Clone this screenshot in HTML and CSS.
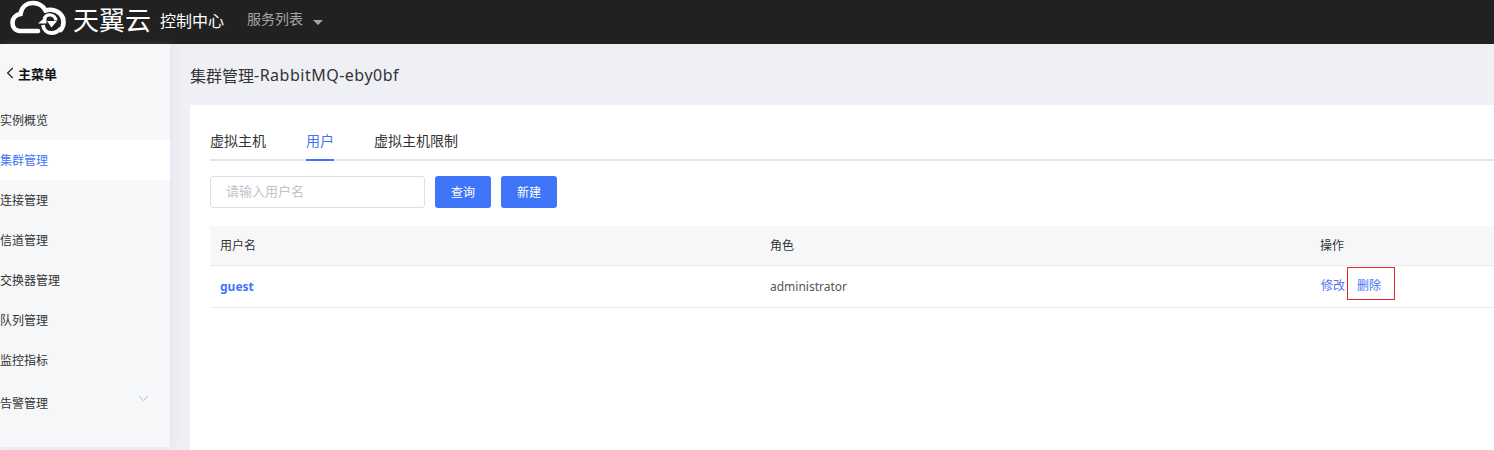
FILE: index.html
```html
<!DOCTYPE html>
<html lang="zh-CN">
<head>
<meta charset="utf-8">
<title>集群管理</title>
<link rel="stylesheet" href="styles.css">
</head>
<body>
<header class="topbar">
  <svg class="cloud" width="60" height="36" viewBox="0 0 60 36" fill="none">
    <path d="M30 31H12C7 31 4.500 27 4.500 22.500C4.500 18 8 14.500 12.500 14C13.500 7 18.500 3 25 3C31 3 35 6 37.500 10.500C39 10 41 9.500 43 9.800C50.500 10.500 55.500 15.500 55.500 22C55.500 25.500 54.500 28 52.500 30" stroke="#fff" stroke-width="4.600" stroke-linecap="round"/>
    <path d="M36 19C37.500 15.500 40 14.500 43 15C46 15.500 47.500 18 48 20.500" stroke="#fff" stroke-width="3.200"/>
    <path d="M35 25C35.500 30 39 33 43.500 33C47.500 33 50.500 31 52.500 28.500" stroke="#fff" stroke-width="3.800"/>
    <path d="M30 23.500L38.500 16L38.500 23.500Z" fill="#fff"/>
    <path d="M39 21H49L43.500 27.500Z" fill="#fff"/>
  </svg>
  <span class="brand">天翼云</span>
  <span class="console">控制中心</span>
  <span class="services">服务列表</span>
  <span class="caret"></span>
</header>
<div class="body">
  <aside class="sidebar">
    <div class="back">
      <svg class="back-icon" width="8" height="12" viewBox="0 0 8 12" fill="none"><path d="M6.800 1L1.600 6L6.800 11" stroke="#222" stroke-width="1.200"/></svg>
      <span>主菜单</span>
    </div>
    <nav class="menu">
      <a class="menu-item">实例概览</a>
      <a class="menu-item active">集群管理</a>
      <a class="menu-item">连接管理</a>
      <a class="menu-item">信道管理</a>
      <a class="menu-item">交换器管理</a>
      <a class="menu-item">队列管理</a>
      <a class="menu-item">监控指标</a>
      <a class="menu-item group">告警管理
        <svg class="chev" width="11" height="7" viewBox="0 0 11 7" fill="none"><path d="M1 1L5.500 5.500L10 1" stroke="#b4bac6" stroke-width="1"/></svg>
      </a>
    </nav>
  </aside>
  <main class="main">
    <h1 class="title">集群管理<span class="latin">-RabbitMQ-eby0bf</span></h1>
    <section class="card">
      <div class="tabs">
        <span class="tab">虚拟主机</span>
        <span class="tab current">用户</span>
        <span class="tab">虚拟主机限制</span>
      </div>
      <div class="toolbar">
        <div class="input">请输入用户名</div>
        <button class="btn">查询</button>
        <button class="btn">新建</button>
      </div>
      <div class="table">
        <div class="row head">
          <span class="c1">用户名</span><span class="c2">角色</span><span class="c3">操作</span>
        </div>
        <div class="row data">
          <span class="c1 name">guest</span><span class="c2 role">administrator</span>
          <span class="c3 ops"><a class="op">修改</a><a class="op del">删除</a></span>
        </div>
      </div>
    </section>
  </main>
</div>
</body>
</html>
```
FILE: styles.css
```css
* { box-sizing: border-box; }
html, body { margin: 0; height: 450px; overflow: hidden; }
body { font-family: "Noto Sans CJK SC", "Noto Sans", sans-serif; font-size: 12px; color: #2e2e2e; background: #eff0f5; }
.topbar { height: 44px; background: #212121; display: flex; align-items: center; padding-left: 8px; }
.cloud { flex: none; margin-top: -8px; }
.brand { font-size: 26px; color: #fff; margin-left: 5px; width: 77px; white-space: nowrap; line-height: 38px; margin-top: -6px; }
.console { font-size: 16px; color: #fff; margin-left: 10px; margin-top: -5px; }
.services { font-size: 14px; color: #a3a5a8; margin-left: 23px; margin-top: -8px; }
.caret { width: 0; height: 0; border: 5px solid transparent; border-top: 5px solid #a3a5a8; border-bottom: 0; margin-left: 10px; }
.body { display: flex; height: 406px; }
.sidebar { width: 170px; height: 403px; flex: none; background: #f6f7f9; box-shadow: 4px 0 8px rgba(180,185,200,.15); }
.back { display: flex; align-items: center; height: 56px; padding: 2px 0 0 6px; gap: 4px; font-size: 13px; font-weight: 700; color: #111; }
.menu { display: flex; flex-direction: column; }
.menu-item { height: 40px; display: flex; align-items: center; padding-bottom: 2px; font-size: 12px; color: #333; }
.menu-item.active { background: #fff; color: #3f75f8; }
.menu-item.group { height: 46px; justify-content: space-between; padding-right: 21px; }
.chev { margin-top: -7px; }
.main { flex: 1; min-width: 0; padding-left: 20px; }
.title { margin: 0; height: 61px; display: flex; align-items: center; font-family: "Noto Sans", "Noto Sans CJK SC", sans-serif; font-size: 16px; font-weight: 400; color: #333; }
.latin { letter-spacing: .5px; }
.card { background: #fff; height: 345px; padding: 20px 0 0 20px; }
.tabs { display: flex; gap: 40px; height: 36px; border-bottom: 2px solid #e4e7ee; }
.tab { font-size: 14px; line-height: 30px; height: 36px; color: #333; }
.tab.current { color: #3f75f8; border-bottom: 2px solid #3f75f8; }
.toolbar { display: flex; align-items: center; gap: 10px; margin-top: 15px; }
.input { width: 215px; height: 32px; border: 1px solid #dcdfe6; border-radius: 3px; padding-left: 15px; line-height: 27px; font-size: 13px; color: #bfc3cc; }
.btn { width: 56px; height: 32px; border: 0; border-radius: 3px; background: #3f75f8; color: #fff; font-family: inherit; font-size: 12px; padding: 0 0 2px; }
.table { margin-top: 18px; }
.row { display: flex; align-items: center; border-bottom: 1px solid #e9ebef; font-size: 12px; }
.head { height: 40px; padding-bottom: 2px; background: #f6f7f9; color: #333; }
.data { height: 42px; }
.c1 { width: 560px; padding-left: 10px; flex: none; }
.c2 { width: 550px; flex: none; }
.c3 { flex: 1; }
.name { color: #3f75f8; font-weight: 700; font-family: "Noto Sans", sans-serif; }
.role { color: #555; font-family: "Noto Sans", sans-serif; }
.ops { display: flex; align-items: center; margin-left: 1px; }
.op { color: #5a6ff0; line-height: 16px; margin-top: -3px; }
.del { color: #3f75f8; border: 1px solid #e8232a; width: 48px; height: 33px; line-height: 34px; padding-left: 9px; margin-left: 2px; margin-top: -6px; }
```
